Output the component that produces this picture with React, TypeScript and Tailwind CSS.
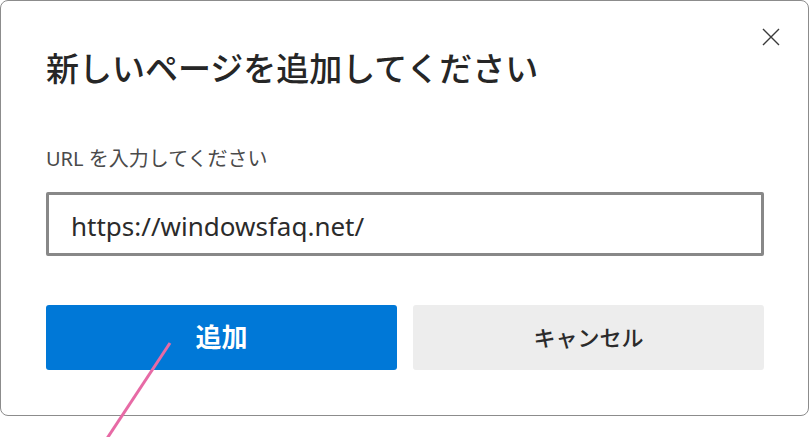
import React from 'react';

const FONT = "font-['Noto_Sans','Noto_Sans_CJK_JP',sans-serif]";

const CloseIcon = () => (
  <svg width="18" height="18" viewBox="0 0 18 18" fill="none">
    <path d="M1 1L17 17M17 1L1 17" stroke="#3a3a3a" strokeWidth="1.4" />
  </svg>
);

const AddPageDialog = () => {
  const [url, setUrl] = React.useState('https://windowsfaq.net/');

  return (
    <div className="w-[809px] h-[416px] bg-white border border-[#8c8c8c] rounded-[8px] flex flex-col">
      <div className="flex justify-end pt-[27px] pr-[28px]">
        <button className="h-[18px] w-[18px] flex items-center justify-center">
          <CloseIcon />
        </button>
      </div>

      <div className="px-[45px] pr-[44px] flex flex-col">
        <h1 className="text-[33px] leading-[46px] font-medium text-[#262626]">
          新しいページを追加してください
        </h1>

        <label className="mt-[53px] text-[20px] leading-[28px] text-[#4a4a4a]">
          URL を入力してください
        </label>

        <input
          value={url}
          onChange={(e) => setUrl(e.target.value)}
          className="mt-[19px] h-[64px] w-full border-[3px] border-[#888888] rounded-[2px] px-[22px] pt-[3px] text-[26px] text-[#2b2b2b] outline-none"
        />

        <div className="mt-[49px] grid grid-cols-2 gap-[16px]">
          <button className="h-[65px] rounded-[3px] bg-[#0078d7] text-white text-[26px] font-bold">
            追加
          </button>
          <button className="h-[65px] rounded-[3px] bg-[#ededed] text-[#2b2b2b] text-[22px] font-medium">
            キャンセル
          </button>
        </div>
      </div>
    </div>
  );
};

export default function App() {
  return (
    <div className={`relative w-[811px] h-[437px] bg-white overflow-hidden ${FONT}`}>
      <AddPageDialog />
      <svg className="absolute left-0 top-0 pointer-events-none" width="811" height="437">
        <line x1="170" y1="343" x2="106" y2="440" stroke="#e76aa5" strokeWidth="3" />
      </svg>
    </div>
  );
}
